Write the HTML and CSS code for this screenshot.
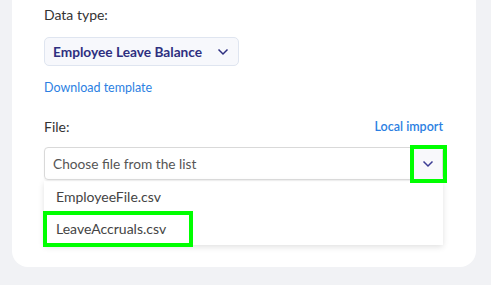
FILE: index.html
```html
<!DOCTYPE html>
<html lang="en">
<head>
  <meta charset="UTF-8" />
  <title>Import</title>
  <link rel="stylesheet" href="styles.css">
</head>
<body>

<div class="card">
  <div class="label">Data type:</div>
  <div class="type-select">
    <span>Employee Leave Balance</span>
    <svg class="chevron" width="12" height="8" viewBox="0 0 12 8"><path d="M1.5 1.5 L6 6 L10.5 1.5" fill="none" stroke="#2e2f80" stroke-width="1.5"/></svg>
  </div>
  <a class="link download" href="#">Download template</a>

  <div class="file-row">
    <span class="label">File:</span>
    <a class="link local" href="#">Local import</a>
  </div>

  <div class="file-select">
    <span class="placeholder">Choose file from the list</span>
    <div class="toggle">
      <svg width="12" height="8" viewBox="0 0 12 8"><path d="M1.5 1.5 L6 6 L10.5 1.5" fill="none" stroke="#3b3c94" stroke-width="1.5"/></svg>
    </div>
    <div class="mark mark-toggle"></div>
  </div>

  <ul class="options">
    <li>EmployeeFile.csv</li>
    <li class="picked">LeaveAccruals.csv<div class="mark mark-item"></div></li>
  </ul>
</div>

</body>
</html>
```

FILE: styles.css
```css
body {
  margin: 0;
  background: #f1f2f5;
  font-family: Lato, "Liberation Sans", sans-serif;
  color: #333;
}

.card {
  background: white;
  width: 399px;
  margin-left: 12px;
  padding: 5px 33px 22px 32px;
  border-radius: 0 0 16px 16px;
}

.label {
  font-size: 14px;
  line-height: 20px;
  color: #333;
}

.type-select {
  display: flex;
  align-items: center;
  justify-content: space-between;
  height: 27px;
  margin-top: 12px;
  padding: 0 9px 0 8px;
  width: 176px;
  background: #f7f8fc;
  border: 1px solid #dfe5f0;
  border-radius: 5px;
  font-size: 13.7px;
  font-weight: 700;
  color: #2e2f80;
}

.link {
  color: #2c7fe2;
  font-size: 12.5px;
  line-height: 16px;
  text-decoration: none;
}

.download {
  display: block;
  margin-top: 14px;
}

.file-row {
  display: flex;
  justify-content: space-between;
  align-items: center;
  margin-top: 21px;
}

.local {
  font-weight: 600;
}

.file-select {
  position: relative;
  display: flex;
  align-items: center;
  justify-content: space-between;
  height: 31px;
  margin-top: 10px;
  border: 1px solid #d9d9d9;
  border-radius: 4px;
  box-shadow: 0 1px 2px rgba(0,0,0,0.06);
}

.placeholder {
  padding-left: 8px;
  font-size: 13.7px;
  color: #555;
}

.toggle {
  display: flex;
  align-items: center;
  justify-content: center;
  width: 29px;
  height: 31px;
  background: #f8f8fb;
}

.mark {
  position: absolute;
  border: 4px solid #00ff00;
  box-sizing: border-box;
}

.mark-toggle {
  right: -5px;
  top: -3px;
  width: 37px;
  height: 38px;
}

.options {
  list-style: none;
  margin: 1px 0 0;
  padding: 0;
  background: white;
  box-shadow: 0 2px 6px rgba(0,0,0,0.12);
}

.options li {
  position: relative;
  height: 32px;
  line-height: 32px;
  padding-left: 12px;
  font-size: 14px;
  color: #444;
}

.mark-item {
  left: -1px;
  top: -2px;
  width: 150px;
  height: 36px;
}
```
